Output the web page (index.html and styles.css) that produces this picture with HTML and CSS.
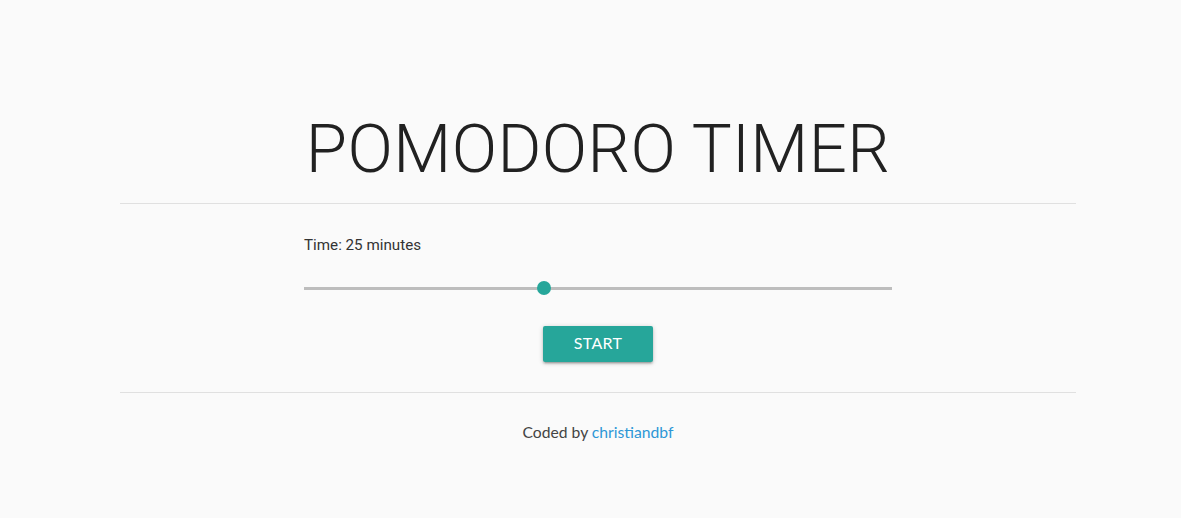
FILE: index.html
```html
<!DOCTYPE html>
<html>
<head>
<meta charset="utf-8">
<link rel="stylesheet" href="styles.css">
</head>
<body>
<div class="page">
  <header class="header">
    <h1 class="title">POMODORO TIMER</h1>
  </header>
  <hr class="divider">
  <section class="timer">
    <label class="time-label" for="range">Time: 25 minutes</label>
    <div class="slider">
      <div class="track"></div>
      <div class="thumb"></div>
    </div>
    <button class="btn">START</button>
  </section>
  <hr class="divider">
  <footer class="footer">Coded by <a class="link" href="#">christiandbf</a></footer>
</div>
</body>
</html>
```
FILE: styles.css
```css
html, body { margin: 0; padding: 0; }
body {
  background: #fafafa;
  font-family: Roboto, "Liberation Sans", sans-serif;
  color: #212121;
  padding-left: 15px;
}
.page {
  width: 956px;
  margin: 0 auto;
  display: flex;
  flex-direction: column;
  align-items: center;
}
.header { padding-top: 116px; padding-bottom: 20px; }
.title {
  margin: 0;
  font-family: Roboto, sans-serif;
  font-weight: 300;
  font-size: 67px;
  line-height: 1;
  color: #212121;
  letter-spacing: 0.4px;
}
.divider {
  width: 956px;
  margin: 0;
  border: none;
  border-top: 1px solid #e0e0e0;
  height: 0;
}
.timer {
  width: 588px;
  display: flex;
  flex-direction: column;
  align-items: stretch;
  padding-top: 31px;
  padding-bottom: 30px;
}
.time-label {
  font-family: Roboto, sans-serif;
  font-size: 15.2px;
  color: #333;
  line-height: 20px;
}
.slider {
  position: relative;
  height: 14px;
  margin-top: 26px;
  display: flex;
  align-items: center;
}
.track { width: 100%; height: 3px; background: #bdbdbd; }
.thumb {
  position: absolute;
  left: 233px;
  top: 0;
  width: 14px;
  height: 14px;
  border-radius: 50%;
  background: #26a69a;
}
.btn {
  align-self: center;
  margin-top: 31px;
  width: 110px;
  height: 36px;
  padding: 0 0 3px;
  border: none;
  border-radius: 2px;
  background: #26a69a;
  color: #fff;
  font-family: Lato, sans-serif;
  font-size: 16px;
  letter-spacing: 0.3px;
  box-shadow: 0 2px 2px 0 rgba(0,0,0,0.14), 0 3px 1px -2px rgba(0,0,0,0.12), 0 1px 5px 0 rgba(0,0,0,0.2);
}
.footer {
  padding-top: 30px;
  font-family: Lato, sans-serif;
  font-size: 15.7px;
  color: #444;
}
.link { color: #2d97d6; text-decoration: none; }
```
